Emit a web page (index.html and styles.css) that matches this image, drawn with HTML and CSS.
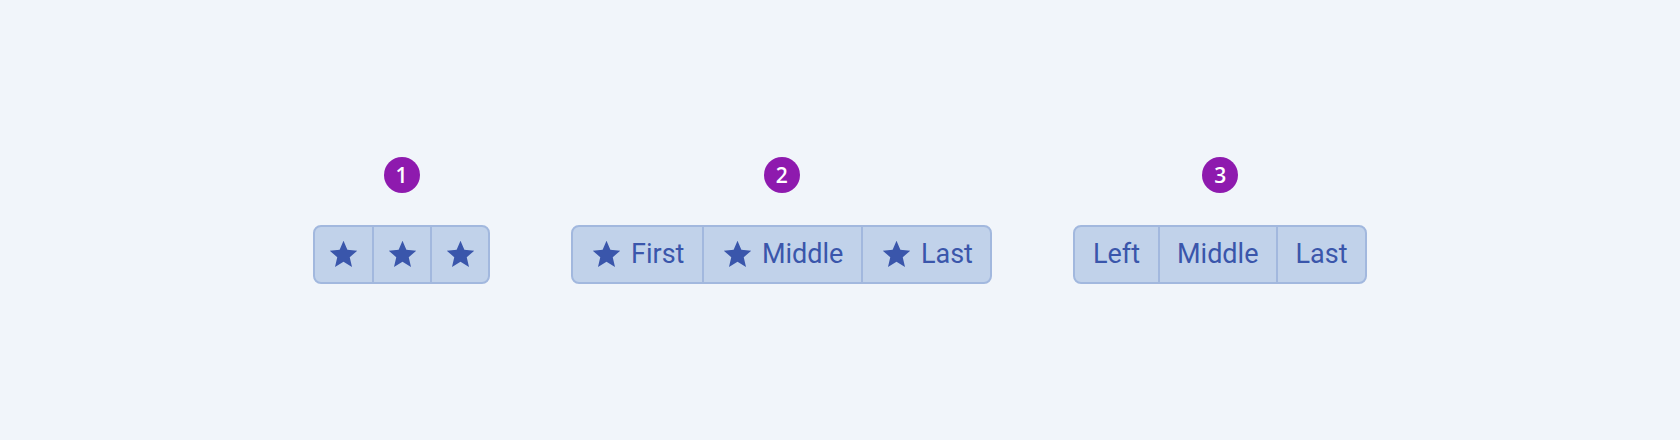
FILE: index.html
```html
<!DOCTYPE html>
<html lang="en">
<head>
  <meta charset="UTF-8">
  <title>Button groups</title>
  <link rel="stylesheet" href="styles.css">
</head>
<body>
  <svg width="0" height="0" class="defs">
    <symbol id="star" viewBox="0 0 24 24">
      <path d="M12 17.27L18.18 21l-1.64-7.03L22 9.24l-7.19-.61L12 2 9.19 8.63 2 9.24l5.46 4.73L5.82 21z"/>
    </symbol>
  </svg>

  <main class="demo">
    <section class="column">
      <span class="badge">1</span>
      <div class="group">
        <button class="btn icon-only"><svg class="star"><use href="#star"/></svg></button>
        <button class="btn icon-only"><svg class="star"><use href="#star"/></svg></button>
        <button class="btn icon-only"><svg class="star"><use href="#star"/></svg></button>
      </div>
    </section>

    <section class="column">
      <span class="badge">2</span>
      <div class="group">
        <button class="btn with-icon"><svg class="star"><use href="#star"/></svg>First</button>
        <button class="btn with-icon"><svg class="star"><use href="#star"/></svg>Middle</button>
        <button class="btn with-icon"><svg class="star"><use href="#star"/></svg>Last</button>
      </div>
    </section>

    <section class="column">
      <span class="badge">3</span>
      <div class="group">
        <button class="btn">Left</button>
        <button class="btn">Middle</button>
        <button class="btn">Last</button>
      </div>
    </section>
  </main>
</body>
</html>
```

FILE: styles.css
```css
html, body {
  height: 100%;
}

body {
  margin: 0;
  background: #f1f5fa;
  font-family: Roboto, "Liberation Sans", sans-serif;
  display: flex;
  align-items: center;
  justify-content: center;
}

.defs {
  position: absolute;
}

.demo {
  display: flex;
  gap: 81px;
  align-items: flex-start;
}

.column {
  display: flex;
  flex-direction: column;
  align-items: center;
  gap: 32px;
}

.badge {
  width: 36px;
  height: 36px;
  border-radius: 50%;
  background: #8e1aae;
  color: #fff;
  font-family: "Open Sans", sans-serif;
  font-size: 21px;
  font-weight: 600;
  display: flex;
  align-items: center;
  justify-content: center;
}

.group {
  display: flex;
  border: 2px solid #a2b8de;
  border-radius: 8px;
  background: #c1d2ea;
  overflow: hidden;
}

.btn {
  height: 55px;
  display: flex;
  align-items: center;
  gap: 8px;
  padding: 0 17.5px;
  border: none;
  background: none;
  color: #3a56ab;
  font-family: inherit;
  font-size: 27px;
}

.btn.with-icon {
  padding-left: 17px;
}

.btn + .btn {
  border-left: 2px solid #a2b8de;
}

.btn.icon-only {
  width: 57px;
  padding: 0;
  justify-content: center;
}

.btn + .btn.icon-only {
  width: 58px;
}

.star {
  width: 33px;
  height: 33px;
  fill: #3a56ab;
}
```
